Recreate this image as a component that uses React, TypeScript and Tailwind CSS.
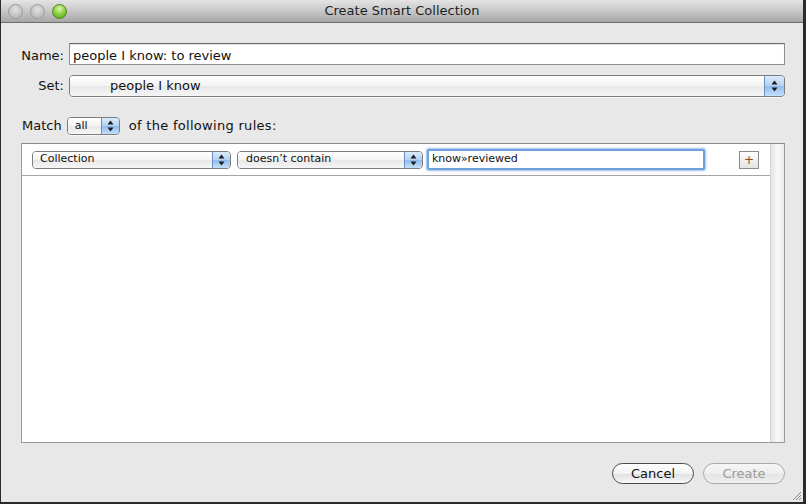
import React from "react";

const font = { fontFamily: '"Lucida Grande", "DejaVu Sans", "Liberation Sans", sans-serif' };

function Arrows({ size = 7 }: { size?: number }) {
  return (
    <svg width={size} height={size + 5} viewBox="0 0 7 12">
      <path d="M3.5 0.5 L6.5 4.5 L0.5 4.5 Z" fill="#1c1c1c" />
      <path d="M3.5 11.5 L6.5 7.5 L0.5 7.5 Z" fill="#1c1c1c" />
    </svg>
  );
}

function Popup({
  label,
  className,
  textClass,
  arrowW,
}: {
  label: string;
  className: string;
  textClass: string;
  arrowW: string;
}) {
  return (
    <div
      className={`flex items-stretch rounded-[4px] border border-[#7d7d7d] overflow-hidden shadow-[0_1px_0_rgba(255,255,255,0.6)] ${className}`}
    >
      <div className={`flex-1 flex items-center bg-[linear-gradient(#ffffff,#f3f3f3_50%,#e8e8e8_52%,#f6f6f6)] text-[#111] ${textClass}`}>
        {label}
      </div>
      <div
        className={`${arrowW} flex items-center justify-center border-l border-[#6c8fbf] bg-[linear-gradient(#dceafb,#b3d1f3_50%,#8fbcee_52%,#c4e0fb)]`}
      >
        <Arrows />
      </div>
    </div>
  );
}

export default function App() {
  return (
    <div
      className="w-[806px] h-[504px] bg-[#2b2b2b] pl-px pr-[3px] pb-[2px] flex flex-col text-[#111]"
      style={font}
    >
      {/* Title bar */}
      <div className="relative h-[23px] shrink-0 bg-[linear-gradient(#e4e4e4,#c8c8c8_50%,#a6a6a6)] border-b border-[#6e6e6e] flex items-center justify-center">
        <div className="absolute left-[7px] top-[4px] flex gap-[7px]">
          <div className="w-[15px] h-[15px] rounded-full border border-[#9c9c9c] bg-[radial-gradient(circle_at_50%_35%,#e2e2e2,#c2c2c2_60%,#b0b0b0)]" />
          <div className="w-[15px] h-[15px] rounded-full border border-[#9c9c9c] bg-[radial-gradient(circle_at_50%_35%,#e2e2e2,#c2c2c2_60%,#b0b0b0)]" />
          <div className="w-[15px] h-[15px] rounded-full border border-[#4c8a1e] bg-[radial-gradient(circle_at_50%_30%,#dff7b8,#8fd443_45%,#4c9c12)]" />
        </div>
        <span className="text-[13px] text-[#1e1e1e]">Create Smart Collection</span>
      </div>

      {/* Body */}
      <div className="flex-1 bg-[#e8e8e8] flex flex-col pl-[20px] pr-[18px] pt-[20px] relative">
        {/* Name */}
        <div className="flex items-center h-[22px]">
          <div className="w-[43px] text-right text-[13px] pt-[3px]">Name:</div>
          <div className="ml-[5px] flex-1 h-[22px] bg-white border border-[#8e8e8e] border-t-[#6a6a6a] shadow-[inset_0_1px_1px_rgba(0,0,0,0.12)] flex items-center pl-[3px] pt-[3px] text-[13px]">
            people I know: to review
          </div>
        </div>

        {/* Set */}
        <div className="flex items-center h-[22px] mt-[10px]">
          <div className="w-[43px] text-right text-[13px]">Set:</div>
          <Popup
            label="people I know"
            className="ml-[5px] flex-1 h-[22px]"
            textClass="pl-[40px] text-[13px]"
            arrowW="w-[20px]"
          />
        </div>

        {/* Match */}
        <div className="flex items-center h-[18px] mt-[20px] text-[13px]">
          <span className="ml-px">Match</span>
          <Popup label="all" className="ml-[5px] w-[53px] h-[18px]" textClass="pl-[7px] text-[11px]" arrowW="w-[18px]" />
          <span className="ml-[9px] tracking-[0.3px]">of the following rules:</span>
        </div>

        {/* List */}
        <div className="mt-[8px] h-[300px] border border-[#9a9a9a] border-t-[#8a8a8a] bg-white flex">
          <div className="flex-1 flex flex-col">
            <div className="h-[32px] border-b border-[#a4a4a4] flex items-center pl-[10px]">
              <Popup label="Collection" className="w-[199px] h-[18px]" textClass="pl-[7px] text-[11px]" arrowW="w-[18px]" />
              <Popup label="doesn’t contain" className="ml-[6px] w-[186px] h-[18px]" textClass="pl-[8px] text-[11px]" arrowW="w-[18px]" />
              <div className="ml-[4px] w-[278px] h-[21px] border-2 border-[#6fa0dc] rounded-[2px] shadow-[0_0_2px_1px_rgba(90,150,220,0.6)] bg-white flex items-center pl-[3px] text-[11px]">
                know»reviewed
              </div>
              <div className="ml-[34px] w-[20px] h-[18px] border border-[#8a8a8a] bg-[linear-gradient(#ffffff,#f0f0f0_50%,#e4e4e4)] flex items-center justify-center text-[12px] leading-none text-[#8a4a1a]">
                +
              </div>
            </div>
            <div className="flex-1" />
          </div>
          <div className="w-[14px] border-l border-[#d8d8d8] bg-[linear-gradient(90deg,#e4e4e4,#f8f8f8_50%,#ececec)]" />
        </div>

        {/* Buttons */}
        <div className="flex justify-end mt-[20px] pr-0">
          <div className="w-[82px] h-[21px] rounded-full border border-[#4a4a4a] bg-[linear-gradient(#ffffff,#f2f2f2_50%,#e2e2e2_55%,#f8f8f8)] flex items-center justify-center text-[13px] text-[#111]">
            Cancel
          </div>
          <div className="ml-[9px] w-[82px] h-[21px] rounded-full border border-[#a8a8a8] bg-[linear-gradient(#f6f6f6,#eeeeee_50%,#e4e4e4_55%,#f0f0f0)] flex items-center justify-center text-[13px] text-[#9a9a9a]">
            Create
          </div>
        </div>

        {/* resize grip */}
        <svg className="absolute right-[1px] bottom-[1px]" width="12" height="12" viewBox="0 0 12 12">
          <path d="M11 3 L3 11 M11 6 L6 11 M11 9 L9 11" stroke="#8a8a8a" strokeWidth="1" />
        </svg>
      </div>
    </div>
  );
}
